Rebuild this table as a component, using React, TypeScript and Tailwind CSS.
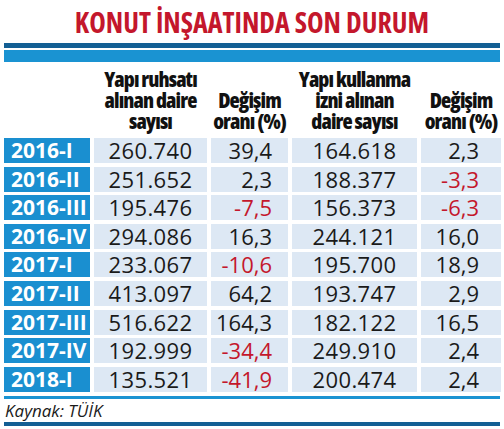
import React from "react";

const rows = [
  { label: "2016-I", a: "260.740", b: "39,4", c: "164.618", d: "2,3" },
  { label: "2016-II", a: "251.652", b: "2,3", c: "188.377", d: "-3,3" },
  { label: "2016-III", a: "195.476", b: "-7,5", c: "156.373", d: "-6,3" },
  { label: "2016-IV", a: "294.086", b: "16,3", c: "244.121", d: "16,0" },
  { label: "2017-I", a: "233.067", b: "-10,6", c: "195.700", d: "18,9" },
  { label: "2017-II", a: "413.097", b: "64,2", c: "193.747", d: "2,9" },
  { label: "2017-III", a: "516.622", b: "164,3", c: "182.122", d: "16,5" },
  { label: "2017-IV", a: "192.999", b: "-34,4", c: "249.910", d: "2,4" },
  { label: "2018-I", a: "135.521", b: "-41,9", c: "200.474", d: "2,4" },
];

// negative values are printed in red
const tone = (v: string) => (v.startsWith("-") ? "text-[#c4172c]" : "text-[#1a1a1a]");

export default function App() {
  return (
    <div className="w-[504px] h-[429px] bg-white overflow-hidden font-['Open_Sans',sans-serif]">
      <h1 className="font-stretch-condensed font-bold text-[28px] leading-[41px] pt-[2px] text-center text-[#c4172c] whitespace-nowrap">
        KONUT İNŞAATINDA SON DURUM
      </h1>

      {/* top double bar */}
      <div className="mx-[4px] h-[5px] bg-[#135f94]" />
      <div className="mx-[4px] h-[2px] bg-white" />
      <div className="mx-[4px] h-[12px] bg-[#1a93d2]" />

      {/* column headers */}
      <div className="font-stretch-condensed font-extrabold text-[21px] leading-[21px] tracking-[-0.9px] text-[#111] grid grid-cols-[86px_113px_77px_125px_80px] gap-x-[4px] mx-[4px] h-[76px] pb-[6px] items-end text-center whitespace-nowrap">
        <div />
        <div>
          Yapı ruhsatı
          <br />
          alınan daire
          <br />
          sayısı
        </div>
        <div>
          Değişim
          <br />
          oranı (%)
        </div>
        <div>
          Yapı kullanma
          <br />
          izni alınan
          <br />
          daire sayısı
        </div>
        <div>
          Değişim
          <br />
          oranı (%)
        </div>
      </div>

      {/* data rows */}
      <div className="mx-[4px] grid grid-cols-[86px_113px_77px_125px_80px] gap-x-[4px] gap-y-[3.6px] text-[22px]">
        {rows.map((r) => (
          <React.Fragment key={r.label}>
            <div className="h-[25px] bg-[#1a8fd0] text-white font-bold text-[21px] leading-[25px] pl-[7px] whitespace-nowrap">
              {r.label}
            </div>
            <div className="h-[25px] bg-[#dde8f4] leading-[25px] text-center text-[#1a1a1a] tracking-[0.4px]">
              {r.a}
            </div>
            <div className={`h-[25px] bg-[#dde8f4] leading-[25px] text-right pr-[16px] ${tone(r.b)}`}>
              {r.b}
            </div>
            <div className="h-[25px] bg-[#dde8f4] leading-[25px] text-center text-[#1a1a1a] tracking-[0.4px]">
              {r.c}
            </div>
            <div className={`h-[25px] bg-[#dde8f4] leading-[25px] text-right pr-[22px] ${tone(r.d)}`}>
              {r.d}
            </div>
          </React.Fragment>
        ))}
      </div>

      {/* footer */}
      <div className="mx-[4px] mt-[4px] h-[3px] bg-[#1a93d2]" />
      <div className="pl-[5px] h-[23px] text-[17px] leading-[23px] italic text-[#1a1a1a]">
        Kaynak: TÜİK
      </div>
      <div className="mx-[4px] h-[4px] bg-[#135f94]" />
    </div>
  );
}
